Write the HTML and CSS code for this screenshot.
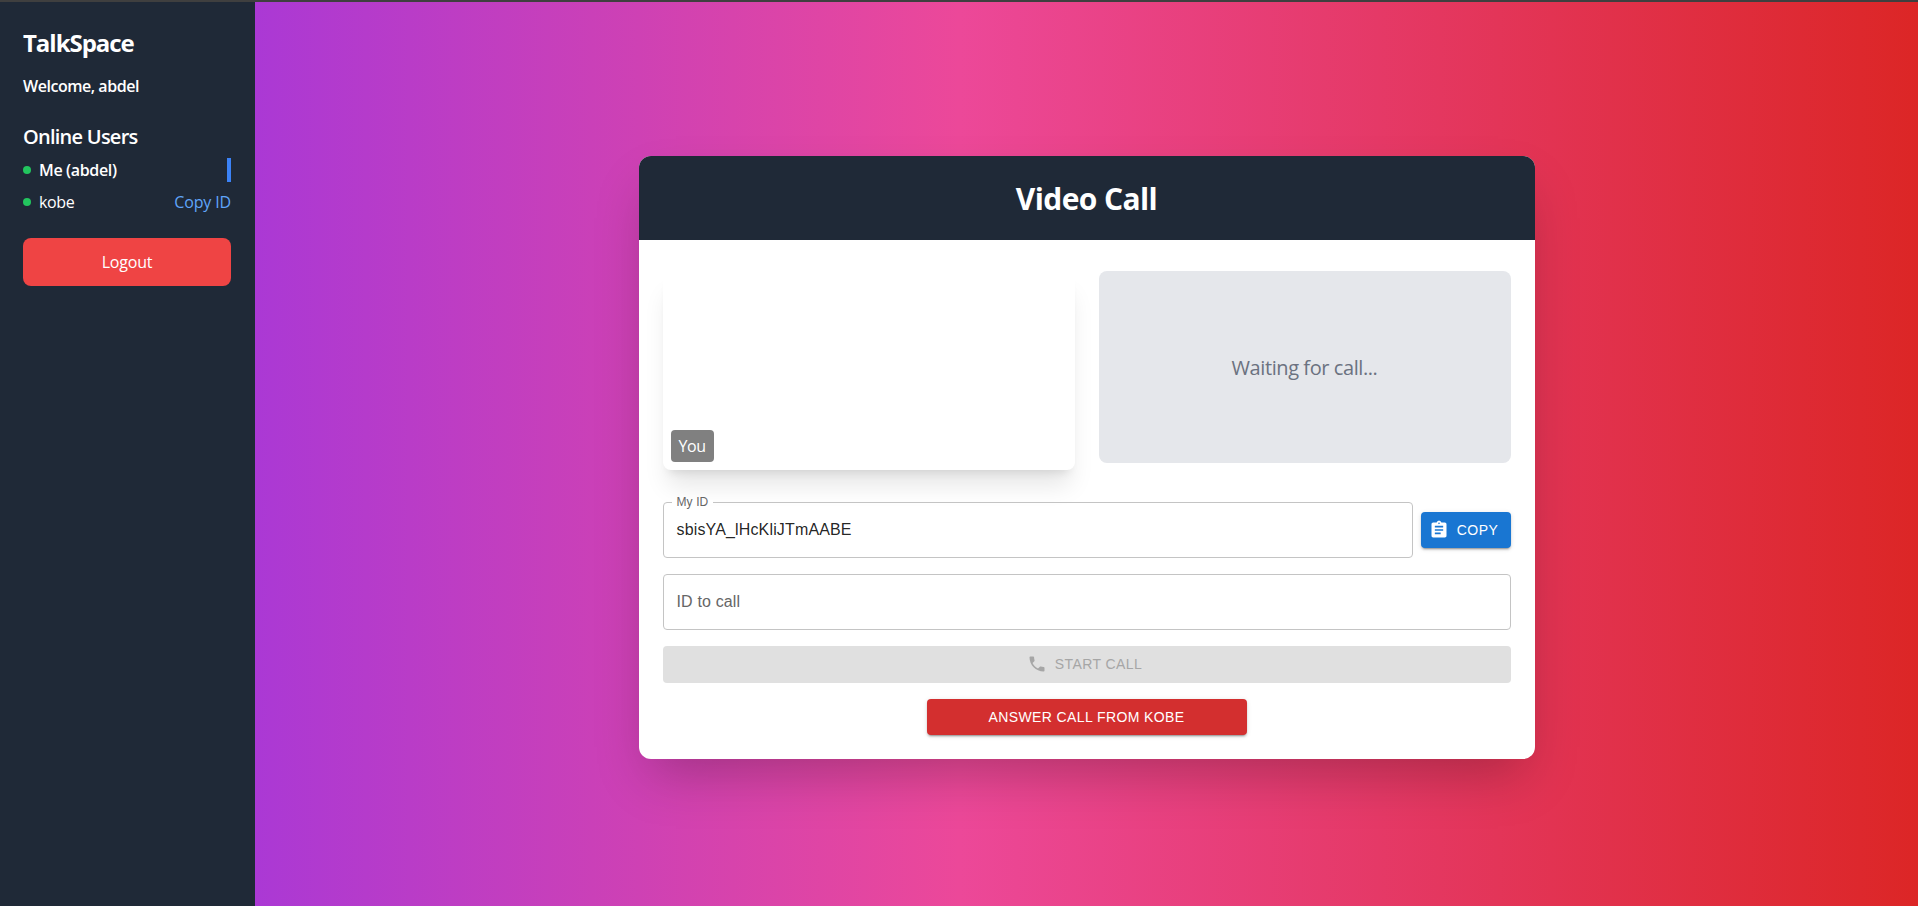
FILE: index.html
```html
<!DOCTYPE html>
<html lang="en">
<head>
<meta charset="utf-8">
<title>TalkSpace</title>
<link rel="stylesheet" href="styles.css">
</head>
<body>
<div class="app">
  <aside class="sidebar">
    <h1 class="brand">TalkSpace</h1>
    <p class="welcome">Welcome, abdel</p>
    <h2 class="online">Online Users</h2>
    <ul class="users">
      <li class="user user-me"><span class="dot"></span><span class="name">Me (abdel)</span></li>
      <li class="user"><span class="dot"></span><span class="name">kobe</span><a class="copy-id">Copy ID</a></li>
    </ul>
    <button class="logout">Logout</button>
  </aside>
  <main class="main">
    <section class="card">
      <header class="card-head"><h2 class="title">Video Call</h2></header>
      <div class="card-body">
        <div class="videos">
          <div class="video"><span class="tag">You</span></div>
          <div class="waiting"><span class="waiting-text">Waiting for call...</span></div>
        </div>
        <div class="id-row">
          <div class="field">
            <span class="field-label">My ID</span>
            <span class="field-value">sbisYA_lHcKliJTmAABE</span>
          </div>
          <button class="btn btn-copy">
            <svg class="icon" viewBox="0 0 24 24"><path d="M19 3h-4.180C14.400 1.840 13.300 1 12 1c-1.300 0-2.400.84-2.820 2H5c-1.100 0-2 .9-2 2v14c0 1.100.9 2 2 2h14c1.100 0 2-.9 2-2V5c0-1.100-.9-2-2-2zm-7 0c.55 0 1 .45 1 1s-.45 1-1 1-1-.45-1-1 .45-1 1-1zm2 14H7v-2h7v2zm3-4H7v-2h10v2zm0-4H7V7h10v2z"/></svg>
            <span>Copy</span>
          </button>
        </div>
        <div class="field"><span class="field-placeholder">ID to call</span></div>
        <button class="btn btn-start" disabled>
          <svg class="icon" viewBox="0 0 24 24"><path d="M6.620 10.790c1.440 2.830 3.760 5.140 6.590 6.590l2.200-2.200c.27-.27.67-.36 1.020-.24 1.120.37 2.330.57 3.570.57.55 0 1 .45 1 1V20c0 .55-.45 1-1 1-9.390 0-17-7.610-17-17 0-.55.45-1 1-1h3.500c.55 0 1 .45 1 1 0 1.250.2 2.450.57 3.570.11.35.03.74-.25 1.020l-2.200 2.200z"/></svg>
          <span>Start Call</span>
        </button>
        <button class="btn btn-answer">Answer call from kobe</button>
      </div>
    </section>
  </main>
</div>
</body>
</html>
```
FILE: styles.css
```css
* { box-sizing: border-box; margin: 0; padding: 0; }
body {
  height: 906px;
  overflow: hidden;
  font: 16px/24px "Open Sans", "Noto Sans", sans-serif;
  color: #fff;
}
button { border: 0; color: inherit; font: inherit; }
.app {
  display: flex;
  height: 906px;
  border-top: 2px solid #3f3f3f;
  background: linear-gradient(to right, #9333ea, #ec4899, #dc2626) padding-box;
}
.sidebar { width: 255px; flex: none; padding: 24px 24px 0 23px; background: #1f2937; }
.brand { margin: 1px 0 15px; font-size: 24px; line-height: 32px; font-weight: 700; letter-spacing: -1.03px; }
.welcome { margin-bottom: 25px; font-weight: 600; letter-spacing: -0.46px; }
.online { margin-bottom: 7px; font-size: 20px; line-height: 28px; font-weight: 600; letter-spacing: -0.75px; }
.users { list-style: none; }
.user { display: flex; align-items: center; height: 24px; margin-bottom: 8px; }
.user-me { border-right: 4px solid #3b82f6; font-weight: 600; }
.dot { width: 8px; height: 8px; margin-right: 8px; border-radius: 50%; background: #22c55e; }
.name { flex: 1; letter-spacing: -0.35px; }
.copy-id { color: #60a5fa; letter-spacing: -0.15px; }
.logout {
  width: 100%;
  height: 48px;
  margin-top: 16px;
  border-radius: 8px;
  background: #ef4444;
  letter-spacing: -0.2px;
}
.main { flex: 1; display: flex; justify-content: center; align-items: center; padding-top: 7px; }
.card {
  width: 896px;
  overflow: hidden;
  border-radius: 12px;
  background: #fff;
  box-shadow: 0 25px 50px -12px rgba(0, 0, 0, .25);
}
.card-head { padding: 25px 24px 23px; background: #1f2937; text-align: center; }
.title { font-size: 30px; line-height: 36px; font-weight: 700; letter-spacing: -0.6px; }
.card-body { display: flex; flex-direction: column; gap: 16px; padding: 31px 24px 24px; }
.videos { display: grid; grid-template-columns: 1fr 1fr; gap: 24px; align-items: start; margin-bottom: 16px; }
.video {
  display: flex;
  align-items: flex-end;
  height: 199px;
  padding: 8px;
  border-radius: 8px;
  box-shadow: 0 20px 25px -5px rgba(0, 0, 0, .1), 0 8px 10px -6px rgba(0, 0, 0, .1);
}
.tag { padding: 4px 8px; border-radius: 4px; background: #808080; letter-spacing: -0.4px; }
.waiting {
  display: flex;
  align-items: center;
  justify-content: center;
  height: 192px;
  padding-top: 2px;
  border-radius: 8px;
  background: #e5e7eb;
}
.waiting-text { font-size: 20px; line-height: 28px; color: #6b7280; letter-spacing: -0.42px; }
.id-row { display: flex; align-items: center; gap: 8px; }
.field {
  position: relative;
  display: flex;
  flex: 1 0 auto;
  align-items: center;
  height: 56px;
  padding: 0 13px;
  border: 1px solid #c4c4c4;
  border-radius: 4px;
  font-family: "Liberation Sans", Arial, sans-serif;
  color: rgba(0, 0, 0, .87);
}
.field-label {
  position: absolute;
  top: -13px;
  left: 8px;
  padding: 0 5px;
  background: linear-gradient(#fff, #fff) center / 100% 4px no-repeat;
  color: #666;
  font-size: 12px;
  letter-spacing: .11px;
}
.field-value { letter-spacing: .15px; }
.field-placeholder { color: #666; letter-spacing: .15px; }
.btn {
  display: flex;
  align-items: center;
  justify-content: center;
  height: 36px;
  border-radius: 4px;
  font: 500 14px/24px "Liberation Sans", Arial, sans-serif;
  letter-spacing: .4px;
  text-transform: uppercase;
}
.icon { width: 20px; height: 20px; margin: 0 8px 0 -4px; fill: currentColor; }
.btn-copy, .btn-answer { box-shadow: 0 3px 1px -2px rgba(0, 0, 0, .2), 0 2px 2px rgba(0, 0, 0, .14), 0 1px 5px rgba(0, 0, 0, .12); }
.btn-copy { width: 90px; background: #1976d2; }
.btn-start { height: 37px; padding-bottom: 1px; background: #e0e0e0; color: #a6a6a6; }
.btn-answer { width: 320px; align-self: center; background: #d32f2f; }
```
